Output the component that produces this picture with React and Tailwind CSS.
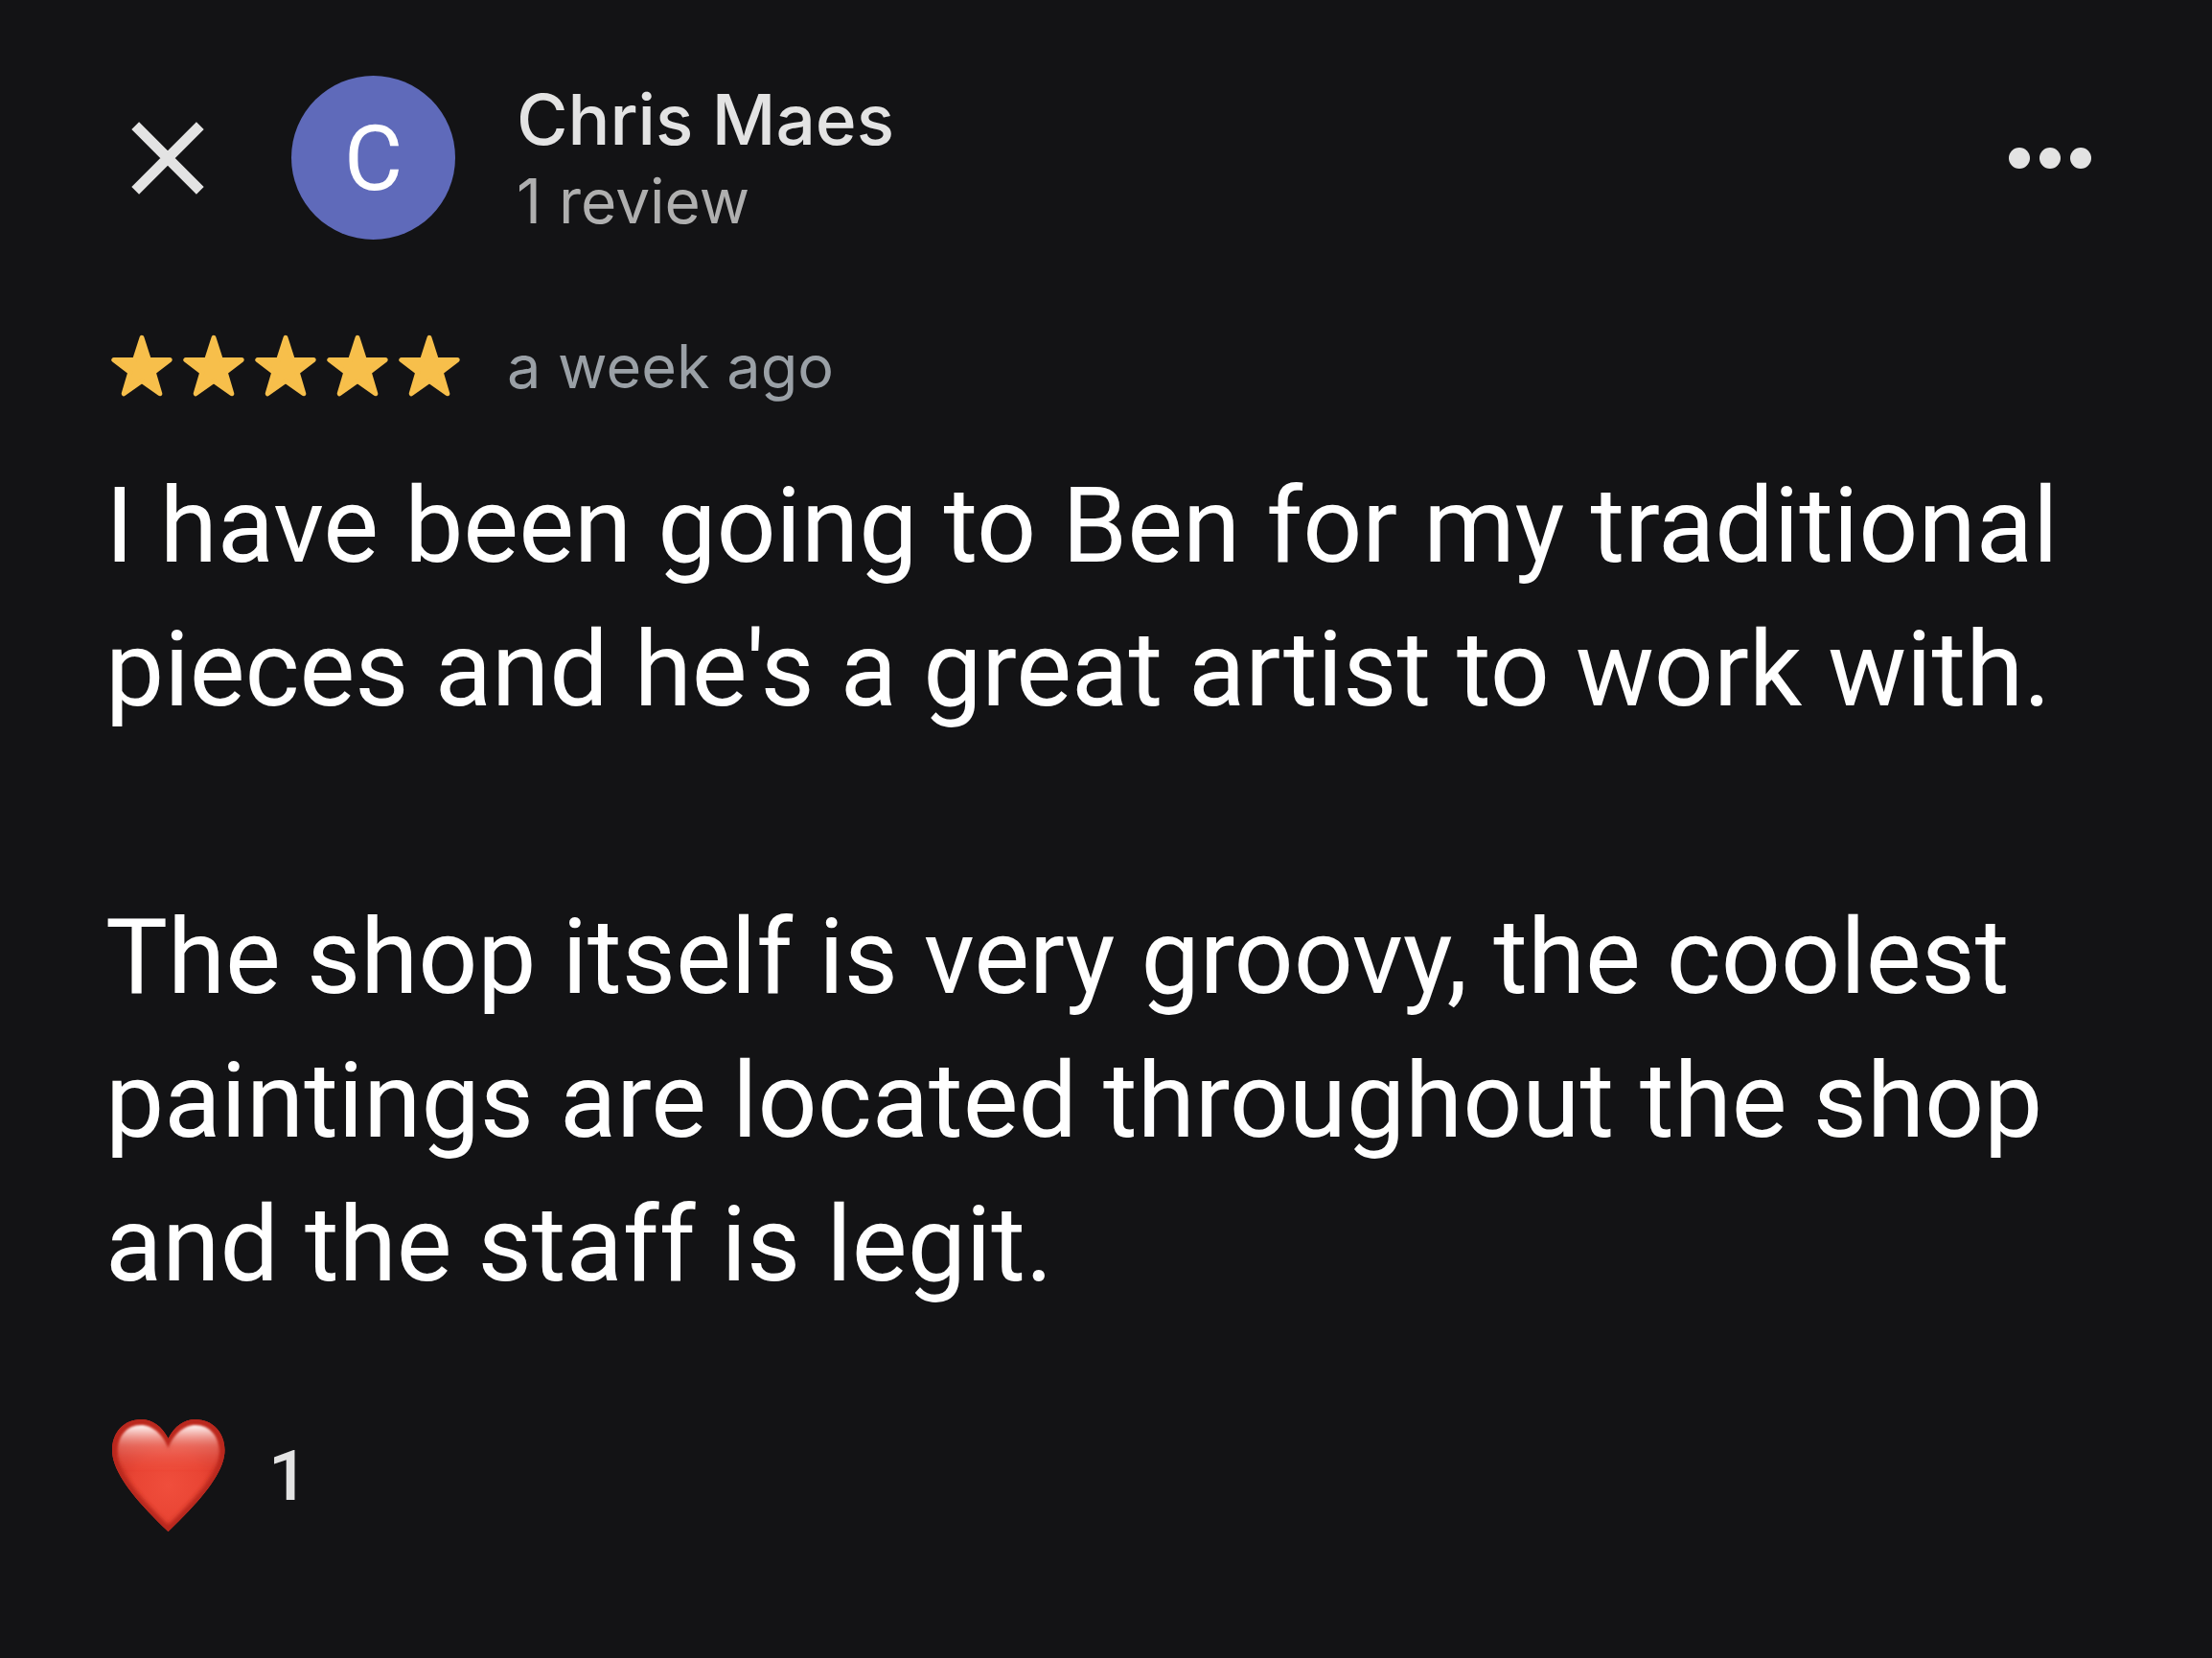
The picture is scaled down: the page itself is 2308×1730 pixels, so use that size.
import React from "react";

const paragraphs = [
  "I have been going to Ben for my traditional pieces and he's a great artist to work with.",
  "The shop itself is very groovy, the coolest paintings are located throughout the shop and the staff is legit.",
];

function CloseIcon() {
  return (
    <svg viewBox="0 0 76 76" className="size-[76px]" fill="none" stroke="currentColor" strokeWidth="11" aria-hidden="true">
      <path d="M4.2 4.2 71.8 71.8M71.8 4.2 4.2 71.8" />
    </svg>
  );
}

function MoreIcon() {
  return (
    <svg viewBox="0 0 88 22" className="h-[22px] w-[88px]" fill="currentColor" aria-hidden="true">
      <circle cx="12" cy="11" r="11" />
      <circle cx="44" cy="11" r="11" />
      <circle cx="76" cy="11" r="11" />
    </svg>
  );
}

function Star() {
  return (
    <svg viewBox="0 0 75 75" className="size-[75px]" aria-hidden="true">
      <path
        d="M38 7.4 45.4 30.4H67.2L50.2 43.4 56.8 65.8 38 52.4 19.2 65.8 25.8 43.4 8.8 30.4H30.600Z"
        fill="#f7bf4b"
        stroke="#f7bf4b"
        strokeWidth="5"
        strokeLinejoin="round"
      />
    </svg>
  );
}

const HEART =
  "M65.5 27C59 14 49 7 37 7C19 7 7 21 7 39C7 62 30 90 65.5 124C101 90 124.5 62 124.5 39C124.5 21 112 7 94 7C82 7 72 14 65.5 27Z";

function Heart() {
  return (
    <svg viewBox="0 0 132 132" className="size-[132px]" aria-hidden="true">
      <defs>
        <radialGradient id="heart-body" gradientUnits="userSpaceOnUse" cx="66" cy="76" r="72">
          <stop offset="0" stopColor="#f04e3c" />
          <stop offset="0.5" stopColor="#e94534" />
          <stop offset="0.8" stopColor="#d83a2c" />
          <stop offset="1" stopColor="#c92e22" />
        </radialGradient>
        <linearGradient id="heart-shine" gradientUnits="userSpaceOnUse" x1="0" y1="12" x2="0" y2="62">
          <stop offset="0" stopColor="#fff" />
          <stop offset="0.14" stopColor="#fde4e1" stopOpacity="0.85" />
          <stop offset="0.45" stopColor="#f39388" stopOpacity="0.5" />
          <stop offset="1" stopColor="#ee5a4a" stopOpacity="0" />
        </linearGradient>
        <clipPath id="heart-clip">
          <path d={HEART} />
        </clipPath>
        <filter id="heart-soft" x="-10%" y="-10%" width="120%" height="120%">
          <feGaussianBlur stdDeviation="2" />
        </filter>
        <filter id="shine-soft" x="-10%" y="-10%" width="120%" height="120%">
          <feGaussianBlur stdDeviation="1" />
        </filter>
      </defs>
      <path d={HEART} fill="url(#heart-body)" />
      <g clipPath="url(#heart-clip)">
        <path d={HEART} fill="none" stroke="#b8271c" strokeWidth="10" filter="url(#heart-soft)" />
        <path
          d="M65.5 37C60 23 49 13 37 13C22 13 13 25 13 40C13 50 17 58 22 66H109C114 58 118.5 50 118.5 40C118.5 25 109 13 94 13C82 13 71 23 65.5 37Z"
          fill="url(#heart-shine)"
          filter="url(#shine-soft)"
        />
      </g>
    </svg>
  );
}

export default function App() {
  return (
    <main className="min-h-screen bg-[#131315] px-[110px] pt-[79px] pb-20 font-['Inter',sans-serif] text-[#e3e3e3]">
      <header className="flex items-center">
        <button type="button" aria-label="Close" className="flex h-[130px] w-[130px] items-center justify-center">
          <CloseIcon />
        </button>
        <div className="ml-16 flex size-[171px] shrink-0 items-center justify-center rounded-full bg-[#5f6aba] pt-1 font-['Roboto',sans-serif] text-[94px] text-white">
          C
        </div>
        <div className="ml-16">
          <h1 className="text-[73px] leading-[90px] font-medium">Chris Maes</h1>
          <p className="text-[64px] leading-[80px] text-[#afafaf]">1 review</p>
        </div>
        <button type="button" aria-label="More options" className="ml-auto flex h-[130px] w-[118px] items-center justify-center">
          <MoreIcon />
        </button>
      </header>

      <div className="mt-[92px] flex h-20 items-center">
        <div role="img" aria-label="5 out of 5 stars" className="flex">
          {[1, 2, 3, 4, 5].map((n) => (
            <Star key={n} />
          ))}
        </div>
        <span className="ml-11 text-[63px] leading-[80px] text-[#9aa0a6]">a week ago</span>
      </div>

      <div className="mt-[52px] space-y-[150px] font-['Roboto',sans-serif] text-[109px] leading-[150px] text-white">
        {paragraphs.map((text) => (
          <p key={text}>{text}</p>
        ))}
      </div>

      <button type="button" aria-label="Like, 1" className="mt-[100px] flex items-center gap-[38px]">
        <Heart />
        <span className="font-['Roboto',sans-serif] text-[73px] leading-[80px] font-medium">1</span>
      </button>
    </main>
  );
}
